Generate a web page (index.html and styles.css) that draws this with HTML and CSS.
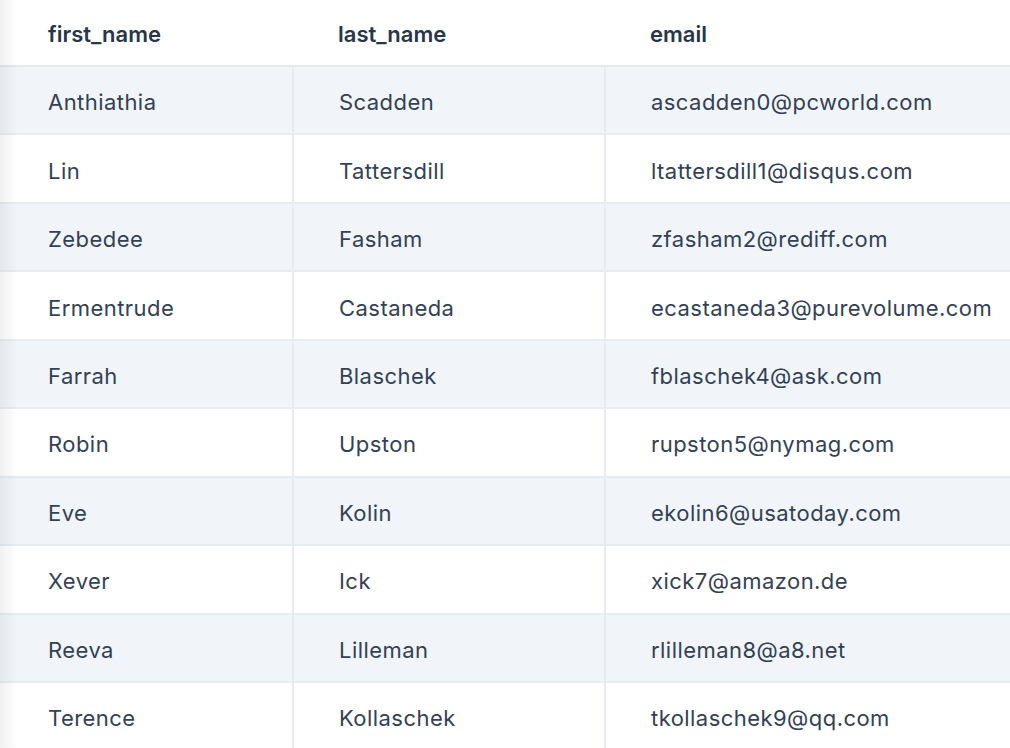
FILE: index.html
```html
<!DOCTYPE html>
<html>
<head>
<meta charset="utf-8">
<link rel="stylesheet" href="styles.css">
</head>
<body>
<div class="wrap">
  <table class="grid">
    <colgroup>
      <col class="c1"><col class="c2"><col class="c3">
    </colgroup>
    <thead>
      <tr><th>first_name</th><th>last_name</th><th>email</th></tr>
    </thead>
    <tbody>
      <tr><td>Anthiathia</td><td>Scadden</td><td>ascadden0@pcworld.com</td></tr>
      <tr><td>Lin</td><td>Tattersdill</td><td>ltattersdill1@disqus.com</td></tr>
      <tr><td>Zebedee</td><td>Fasham</td><td>zfasham2@rediff.com</td></tr>
      <tr><td>Ermentrude</td><td>Castaneda</td><td>ecastaneda3@purevolume.com</td></tr>
      <tr><td>Farrah</td><td>Blaschek</td><td>fblaschek4@ask.com</td></tr>
      <tr><td>Robin</td><td>Upston</td><td>rupston5@nymag.com</td></tr>
      <tr><td>Eve</td><td>Kolin</td><td>ekolin6@usatoday.com</td></tr>
      <tr><td>Xever</td><td>Ick</td><td>xick7@amazon.de</td></tr>
      <tr><td>Reeva</td><td>Lilleman</td><td>rlilleman8@a8.net</td></tr>
      <tr><td>Terence</td><td>Kollaschek</td><td>tkollaschek9@qq.com</td></tr>
    </tbody>
  </table>
</div>
</body>
</html>
```
FILE: styles.css
```css
html, body {
  margin: 0;
  padding: 0;
  background: #ffffff;
  overflow: hidden;
}
body {
  font-family: Inter, "Noto Sans", sans-serif;
  color: #334155;
}
.wrap {
  position: relative;
  width: 1010px;
  height: 748px;
  overflow: hidden;
}
.wrap::before {
  content: "";
  position: absolute;
  left: 0;
  top: 0;
  bottom: 0;
  width: 18px;
  background: linear-gradient(to right, rgba(15, 23, 42, 0.06), rgba(15, 23, 42, 0));
  pointer-events: none;
  z-index: 2;
}
.grid {
  border-collapse: collapse;
  table-layout: fixed;
  width: 1030px;
}
.c1 { width: 293px; }
.c2 { width: 312px; }
.c3 { width: 425px; }
th, td {
  text-align: left;
  padding: 0 0 0 45px;
  white-space: nowrap;
  font-size: 22px;
}
th {
  height: 66px;
  font-weight: 600;
  color: #283649;
  border-bottom: 2px solid #e5e9ee;
  padding-top: 2px;
  box-sizing: border-box;
}
th:first-child, td:first-child {
  padding-left: 48px;
}
td {
  height: 68.44px;
  padding-top: 4px;
  letter-spacing: 0.45px;
  color: #334155;
  border-bottom: 2px solid #e8ecf0;
  border-left: 2px solid #e8ecf0;
  box-sizing: border-box;
}
td:first-child {
  border-left: none;
}
tbody tr:nth-child(odd) td {
  background: #f1f5f9;
}
```
